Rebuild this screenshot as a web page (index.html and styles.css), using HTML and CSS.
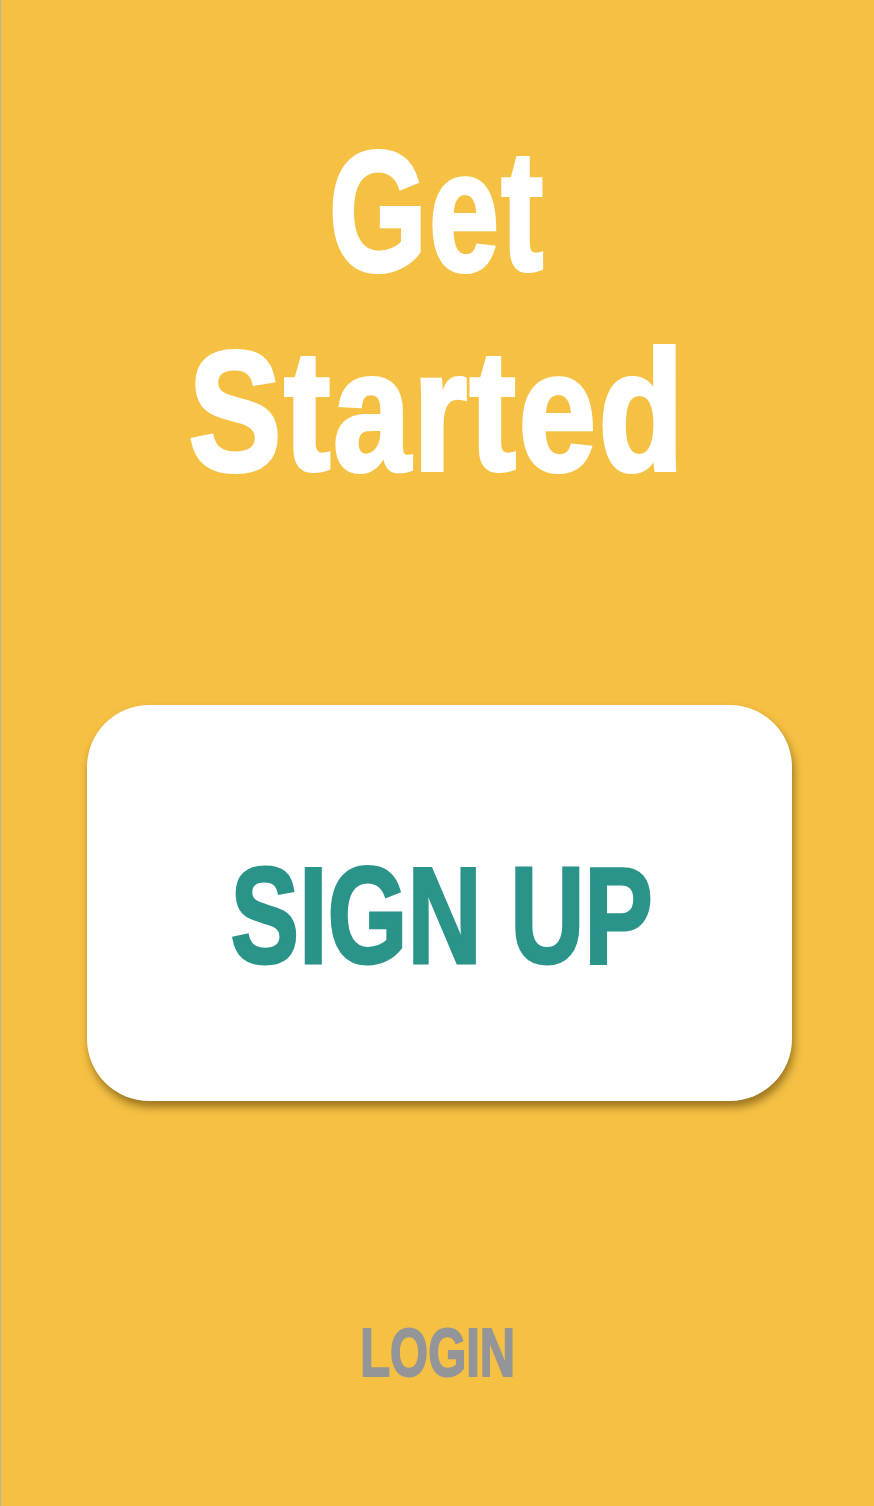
FILE: index.html
```html
<!DOCTYPE html>
<html>
<head>
<meta charset="utf-8">
<link rel="stylesheet" href="styles.css">
</head>
<body>
<main class="screen">
  <h1 class="title"><span class="squeeze get">Get</span><br><span class="squeeze started">Started</span></h1>
  <button class="signup"><span class="squeeze">SIGN UP</span></button>
  <a class="login" href="#"><span class="squeeze">LOGIN</span></a>
</main>
</body>
</html>
```
FILE: styles.css
```css
html, body {
  margin: 0;
  padding: 0;
}
body {
  background: #f6c043;
}
.screen {
  box-sizing: border-box;
  width: 874px;
  height: 1506px;
  border-left: 1px solid #b9b3a6;
  display: flex;
  flex-direction: column;
  align-items: center;
  font-family: "Liberation Sans", "DejaVu Sans Condensed", sans-serif;
  font-weight: 700;
}
.squeeze {
  display: inline-block;
  transform: scaleX(0.8);
  transform-origin: center;
  white-space: nowrap;
}
.title {
  margin: 111px 0 0 0;
  color: #ffffff;
  font-size: 170px;
  line-height: 200px;
  font-weight: 700;
  text-align: center;
  -webkit-text-stroke: 4px #ffffff;
}
.title .get {
  transform: scaleX(0.74);
  letter-spacing: 3px;
}
.title .started {
  transform: scaleX(0.82);
  letter-spacing: 3px;
}
.signup {
  margin-top: 194px;
  margin-left: 3px;
  width: 705px;
  height: 396px;
  border: none;
  border-radius: 62px;
  background: #ffffff;
  box-shadow: 2px 6px 9px rgba(80, 55, 0, 0.55);
  color: #2a938a;
  font-family: inherit;
  font-weight: 700;
  font-size: 137px;
  letter-spacing: 0;
  padding: 24px 0 0 6px;
  line-height: 1;
  -webkit-text-stroke: 3px #2a938a;
}
.signup .squeeze {
  transform: scaleX(0.75);
}
.login {
  margin-top: 217px;
  color: #939598;
  text-decoration: none;
  font-size: 68px;
  line-height: 1;
  letter-spacing: 0;
  -webkit-text-stroke: 2px #939598;
}
.login .squeeze {
  transform: scaleX(0.72);
}
```
